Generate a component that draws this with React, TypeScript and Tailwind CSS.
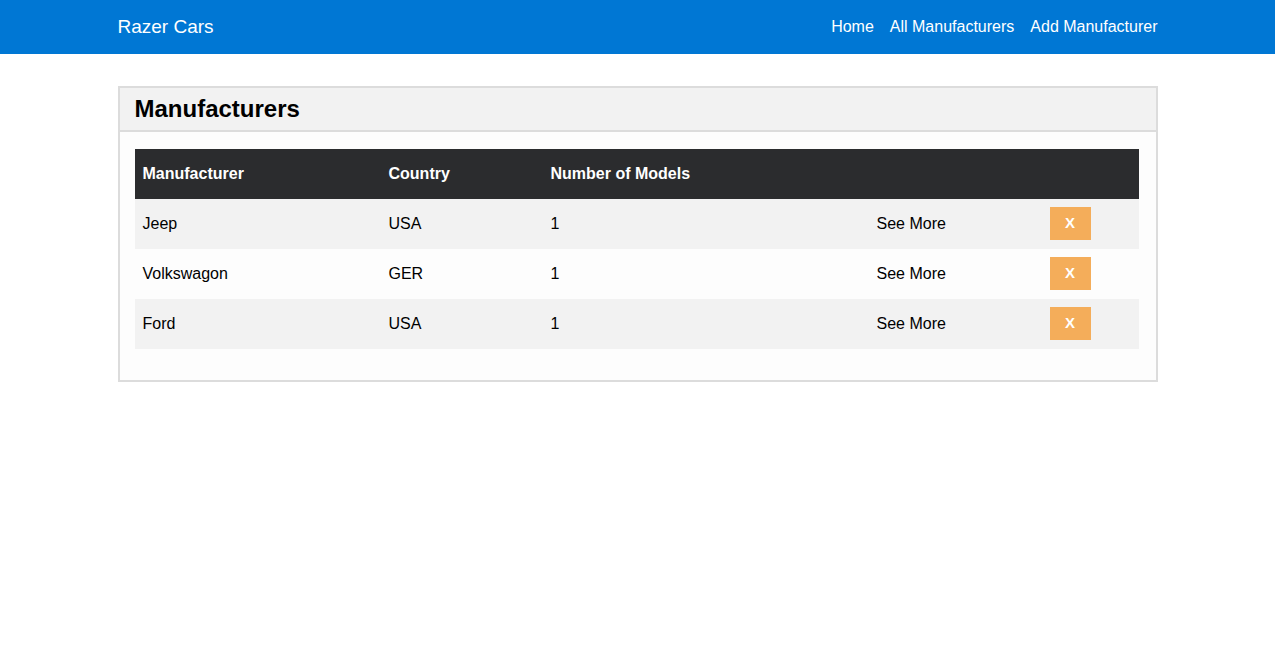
const rows = [
  { name: 'Jeep', country: 'USA', models: 1 },
  { name: 'Volkswagon', country: 'GER', models: 1 },
  { name: 'Ford', country: 'USA', models: 1 },
];

export default function App() {
  return (
    <div className="min-h-screen bg-white text-black" style={{ fontFamily: '"Liberation Sans", Arial, sans-serif' }}>
      {/* Navbar */}
      <nav className="h-[54px] bg-[#0077d4]">
        <div className="mx-auto flex h-full w-[1040px] items-center justify-between">
          <span className="text-[19px] text-white">Razer Cars</span>
          <div className="flex gap-4 text-[16px] text-white">
            <a>Home</a>
            <a>All Manufacturers</a>
            <a>Add Manufacturer</a>
          </div>
        </div>
      </nav>

      {/* Panel */}
      <div className="mx-auto mt-8 w-[1040px] border-2 border-[#dcdcdc] bg-[#fdfdfd]">
        <div className="flex h-[44px] items-center border-b-2 border-[#dcdcdc] bg-[#f2f2f2] px-[15px]">
          <h1 className="text-[24px] font-bold">Manufacturers</h1>
        </div>
        <div className="px-[15px] pt-[17px] pb-[31px]">
          <table className="w-[1004px] table-fixed border-collapse text-[16px]">
            <thead>
              <tr className="h-[50px] bg-[#2b2c2e] text-left text-white">
                <th className="w-[246px] px-2 font-bold">Manufacturer</th>
                <th className="w-[162px] px-2 font-bold">Country</th>
                <th className="w-[326px] px-2 font-bold">Number of Models</th>
                <th className="w-[173px] px-2"></th>
                <th className="px-2"></th>
              </tr>
            </thead>
            <tbody>
              {rows.map((r, i) => (
                <tr key={r.name} className={`h-[50px] ${i % 2 === 0 ? 'bg-[#f2f2f2]' : 'bg-[#fdfdfd]'}`}>
                  <td className="px-2">{r.name}</td>
                  <td className="px-2">{r.country}</td>
                  <td className="px-2">{r.models}</td>
                  <td className="px-2">See More</td>
                  <td className="px-2 align-middle">
                    <button className="mb-[1px] flex h-[33px] w-[41px] items-center justify-center bg-[#f4ad5a] text-[15px] font-bold text-white">
                      X
                    </button>
                  </td>
                </tr>
              ))}
            </tbody>
          </table>
        </div>
      </div>
    </div>
  );
}
